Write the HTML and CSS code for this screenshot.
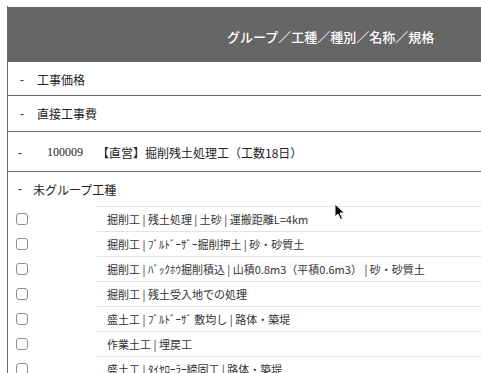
FILE: index.html
```html
<!DOCTYPE html>
<html lang="ja">
<head>
<meta charset="utf-8">
<title>工種一覧</title>
<link rel="stylesheet" href="styles.css">
</head>
<body>
<div class="sheet">
  <div class="head">グループ／工種／種別／名称／規格</div>
  <div class="row row-1"><span class="dash">-</span><span class="label">工事価格</span></div>
  <div class="row row-2"><span class="dash">-</span><span class="label">直接工事費</span></div>
  <div class="row row-3"><span class="dash dash-w">-</span><span class="code">100009</span><span class="label">【直営】掘削残土処理工（工数18日）</span></div>
  <div class="row row-4"><span class="dash dash-n">-</span><span class="label">未グループ工種</span></div>
  <div class="items">
    <div class="item"><div class="cbcell"><input type="checkbox" class="cb"></div><div class="name">掘削工 | 残土処理 | 土砂 | 運搬距離L=4km</div></div>
    <div class="item"><div class="cbcell"><input type="checkbox" class="cb"></div><div class="name">掘削工 | ﾌﾞﾙﾄﾞｰｻﾞｰ掘削押土 | 砂・砂質土</div></div>
    <div class="item"><div class="cbcell"><input type="checkbox" class="cb"></div><div class="name">掘削工 | ﾊﾞｯｸﾎｳ掘削積込 | 山積0.8m3（平積0.6m3） | 砂・砂質土</div></div>
    <div class="item"><div class="cbcell"><input type="checkbox" class="cb"></div><div class="name">掘削工 | 残土受入地での処理</div></div>
    <div class="item"><div class="cbcell"><input type="checkbox" class="cb"></div><div class="name">盛土工 | ﾌﾞﾙﾄﾞｰｻﾞ 敷均し | 路体・築堤</div></div>
    <div class="item"><div class="cbcell"><input type="checkbox" class="cb"></div><div class="name">作業土工 | 埋戻工</div></div>
    <div class="item"><div class="cbcell"><input type="checkbox" class="cb"></div><div class="name">盛土工 | ﾀｲﾔﾛｰﾗｰ締固工 | 路体・築堤</div></div>
  </div>
  <svg class="cursor" width="12" height="18" viewBox="0 0 12 18" aria-hidden="true">
    <path d="M1 1 L1 14 L4 11 L6.5 16.5 L8.5 15.5 L6 10 L10.5 10 Z" fill="#000" stroke="#fff" stroke-width="1" stroke-linejoin="round"/>
  </svg>
</div>
</body>
</html>
```
FILE: styles.css
```css
html, body {
  margin: 0;
  padding: 0;
  background: #fff;
  overflow: hidden;
}
body {
  font-family: "Noto Sans CJK JP", "Noto Sans", sans-serif;
  color: #222;
  font-size: 12px;
}
.sheet {
  position: relative;
  margin: 6px 0 0 7px;
  padding-top: 1px;
  border-left: 1px solid #666;
  min-height: 400px;
}
.head {
  height: 55px;
  background: #666;
  color: #fff;
  font-size: 13px;
  font-weight: 500;
  display: flex;
  align-items: center;
  padding-left: 219px;
  padding-top: 3px;
  box-sizing: border-box;
}
.row {
  display: flex;
  align-items: center;
  border-bottom: 1px solid #666;
  box-sizing: content-box;
}
.row-1 { padding-top: 2px; height: 31px; }
.row-2 { height: 35px; }
.row-3 { height: 37px; padding-top: 2px; }
.row-4 { height: 34px; border-bottom: none; padding-top: 0; }
.dash {
  width: 17px;
  margin-left: 12px;
  font-family: "Liberation Sans", sans-serif;
  color: #333;
}
.dash-w { width: 29px; margin-left: 10px; }
.dash-n { width: 15px; margin-left: 10px; }
.code {
  font-family: "Liberation Serif", serif;
  width: 50px;
  color: #222;
}
.items {
  display: flex;
  flex-direction: column;
}
.item {
  display: grid;
  grid-template-columns: 89px 1fr;
  height: 25px;
}
.cbcell {
  display: flex;
  align-items: center;
  padding-left: 8px;
  padding-top: 1px;
}
.cb {
  appearance: none;
  -webkit-appearance: none;
  margin: 0;
  width: 12px;
  height: 12px;
  border: 1px solid #8d8d8d;
  border-radius: 3px;
  background: #fff;
  box-sizing: border-box;
}
.name {
  border-top: 1px solid #e3e3e3;
  display: flex;
  align-items: center;
  padding-left: 10px;
  font-size: 11px;
  color: #333;
  white-space: nowrap;
}
.cursor {
  position: absolute;
  left: 326px;
  top: 197px;
}
```
